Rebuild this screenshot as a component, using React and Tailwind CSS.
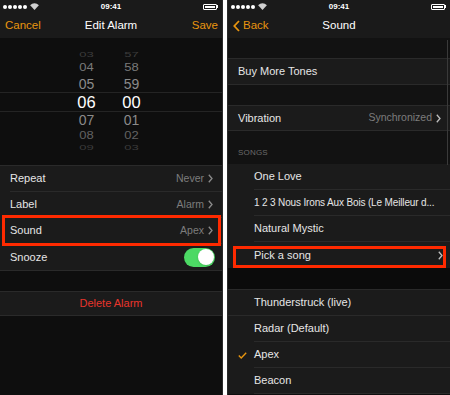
import React from "react";

const font = { fontFamily: '"Liberation Sans", Arial, sans-serif' };

function StatusBar() {
  return (
    <div className="h-[13px] flex items-center justify-between px-[3px] relative">
      <div className="flex items-center gap-[1px]">
        {[0, 1, 2, 3, 4].map((i) => (
          <span key={i} className="w-[4px] h-[4px] rounded-full bg-white" />
        ))}
        <svg width="9" height="7" viewBox="0 0 10 8" className="ml-[2px]">
          <path d="M0 2.5 A7 7 0 0 1 10 2.5 L5 8 Z" fill="#cfcfcf" />
        </svg>
      </div>
      <span className="absolute left-0 right-0 text-center text-[8px] font-bold text-white leading-none">09:41</span>
      <div className="flex items-center mr-[1px]">
        <div className="w-[14px] h-[6px] border border-white rounded-[1px] p-[1px]">
          <div className="w-full h-full bg-white" />
        </div>
        <div className="w-[1px] h-[3px] bg-white" />
      </div>
    </div>
  );
}

function Chevron({ color = "#8a8a8a" }) {
  return (
    <svg width="5" height="9" viewBox="0 0 5 9" className="ml-[4px] shrink-0">
      <path d="M0.8 0.8 L4 4.5 L0.8 8.2" fill="none" stroke={color} strokeWidth="1.3" />
    </svg>
  );
}

function PickerRow({ h, m, cls, rowCls, scale }) {
  return (
    <div className={`flex items-center ${rowCls}`}>
      <div className="ml-[64px] flex" style={scale ? { transform: `scaleY(${scale})` } : undefined}>
        <span className={`w-[45px] text-center leading-none ${cls}`}>{h}</span>
        <span className={`w-[45px] text-center leading-none ${cls}`}>{m}</span>
      </div>
    </div>
  );
}

function LeftRow({ label, value, children, last }) {
  return (
    <div className="h-[26px] bg-[#1b1b1b] flex">
      <div className={`flex-1 flex items-center ml-[10px] pr-[9px] ${last ? "" : "border-b border-[#2a2a2a]"}`}>
        <span className="text-[11px] text-[#e6e6e6]">{label}</span>
        <div className="flex-1" />
        {value && <span className="text-[10.5px] text-[#7d7d7d]">{value}</span>}
        {value && <Chevron />}
        {children}
      </div>
    </div>
  );
}

function LeftPanel() {
  return (
    <div className="w-[223px] h-full bg-[#0e0e0e] flex flex-col border-r border-[#2a2a2a]">
      <div className="bg-[#1a1a1a]">
        <StatusBar />
        <div className="h-[25px] flex items-center justify-between px-[5px] relative">
          <span className="text-[11.5px] text-[#e8950f]">Cancel</span>
          <span className="absolute left-0 right-0 text-center text-[11.5px] text-white pointer-events-none">Edit Alarm</span>
          <span className="text-[11.5px] text-[#e8950f] mr-[-1px]">Save</span>
        </div>
      </div>
      <div className="h-[127px] flex flex-col pt-[11px]">
        <PickerRow h="03" m="57" rowCls="h-[10px]" cls="text-[13px] text-[#3c3c3c]" scale={0.5} />
        <PickerRow h="04" m="58" rowCls="h-[16px]" cls="text-[13px] text-[#7a7a7a]" scale={0.85} />
        <PickerRow h="05" m="59" rowCls="h-[17px]" cls="text-[14px] text-[#8a8a8a]" />
        <PickerRow h="06" m="00" rowCls="h-[20px] border-y border-[#242424]" cls="text-[16.5px] text-white" />
        <PickerRow h="07" m="01" rowCls="h-[16px]" cls="text-[14px] text-[#8a8a8a]" />
        <PickerRow h="08" m="02" rowCls="h-[15px]" cls="text-[13px] text-[#626262]" scale={0.85} />
        <PickerRow h="09" m="03" rowCls="h-[9px]" cls="text-[13px] text-[#3c3c3c]" scale={0.5} />
      </div>
      <div className="border-t border-[#2a2a2a]">
        <LeftRow label="Repeat" value="Never" />
        <LeftRow label="Label" value="Alarm" />
        <div className="relative">
          <LeftRow label="Sound" value="Apex" />
          <div className="absolute left-[2px] right-[1px] top-[-3px] bottom-[-2px] border-[3px] border-[#ff2a00]" />
        </div>
        <LeftRow label="Snooze" last>
          <div className="w-[31px] h-[19px] rounded-full bg-[#4cd964] flex items-center justify-end p-[1.5px] mr-[-2px]">
            <div className="w-[16px] h-[16px] rounded-full bg-white shadow" />
          </div>
        </LeftRow>
      </div>
      <div className="h-[21px] border-t border-[#2a2a2a]" />
      <div className="h-[25px] bg-[#1b1b1b] border-y border-[#2a2a2a] flex items-center justify-center">
        <span className="text-[11px] text-[#e8352c]">Delete Alarm</span>
      </div>
    </div>
  );
}

function RightRow({ label, value, chevron, check, inset = true, lastLine = true, labelCls = "text-[11px]" }) {
  return (
    <div className="h-[26px] bg-[#1b1b1b] flex">
      <div className={`w-[26px] shrink-0 flex items-center justify-center pl-[2px] ${!inset && lastLine ? "border-b border-[#2a2a2a]" : ""}`}>
        {check && (
          <svg width="9" height="7" viewBox="0 0 9 7">
            <path d="M0.8 3.6 L3.2 6 L8.2 0.8" fill="none" stroke="#e8950f" strokeWidth="1.4" />
          </svg>
        )}
      </div>
      <div className={`flex-1 min-w-0 flex items-center pr-[7px] ${lastLine ? "border-b border-[#2a2a2a]" : ""}`}>
        <span className={`${labelCls} text-[#e6e6e6] whitespace-nowrap`}>{label}</span>
        <div className="flex-1" />
        {value && <span className="text-[10.5px] text-[#7d7d7d]">{value}</span>}
        {chevron && <Chevron color={value ? "#8a8a8a" : "#bdbdbd"} />}
      </div>
    </div>
  );
}

function PlainRow({ label, value, h }) {
  return (
    <div className={`${h} bg-[#1b1b1b] border-y border-[#2a2a2a] flex items-center pl-[10px] pr-[9px]`}>
      <span className="text-[11px] text-[#e6e6e6]">{label}</span>
      <div className="flex-1" />
      {value && <span className="text-[10.5px] text-[#7d7d7d]">{value}</span>}
      {value && <Chevron color="#bdbdbd" />}
    </div>
  );
}

function RightPanel() {
  return (
    <div className="w-[223px] h-full bg-[#0e0e0e] flex flex-col relative border-l border-[#2a2a2a]">
      <div className="bg-[#1a1a1a]">
        <StatusBar />
        <div className="h-[25px] flex items-center px-[5px] relative">
          <svg width="7" height="12" viewBox="0 0 7 12">
            <path d="M6 1 L1.3 6 L6 11" fill="none" stroke="#e8950f" strokeWidth="1.8" />
          </svg>
          <span className="text-[11.5px] text-[#e8950f] ml-[3px]">Back</span>
          <span className="absolute left-0 right-0 text-center text-[11.5px] text-white pointer-events-none">Sound</span>
        </div>
      </div>
      <div className="h-[20px] bg-[#121212]" />
      <PlainRow label="Buy More Tones" h="h-[27px]" />
      <div className="h-[20px] bg-[#121212]" />
      <PlainRow label="Vibration" value="Synchronized" h="h-[26px]" />
      <div className="h-[33px] flex items-end pl-[10px] pb-[5px] bg-[#121212]">
        <span className="text-[8px] text-[#6a6a6a] tracking-[0.2px]">SONGS</span>
      </div>
      <RightRow label="One Love" />
      <RightRow label="1 2 3 Nous Irons Aux Bois (Le Meilleur d..." labelCls="text-[10px] tracking-[-0.15px]" />
      <RightRow label="Natural Mystic" />
      <div className="relative">
        <RightRow label="Pick a song" chevron lastLine={false} />
        <div className="absolute left-[5px] right-[4px] top-[4px] bottom-[0px] border-[3px] border-[#ff2a00]" />
      </div>
      <div className="h-[22px] bg-[#0b0b0b] border-b border-[#2a2a2a]" />
      <RightRow label="Thunderstruck (live)" inset={false} />
      <RightRow label="Radar (Default)" />
      <RightRow label="Apex" check />
      <RightRow label="Beacon" />
      <div className="absolute right-[2px] top-[40px] h-[125px] w-[1.5px] bg-[#3a3a3a]" />
    </div>
  );
}

export default function App() {
  return (
    <div className="w-[450px] h-[395px] bg-white flex justify-between overflow-hidden" style={font}>
      <LeftPanel />
      <RightPanel />
    </div>
  );
}
